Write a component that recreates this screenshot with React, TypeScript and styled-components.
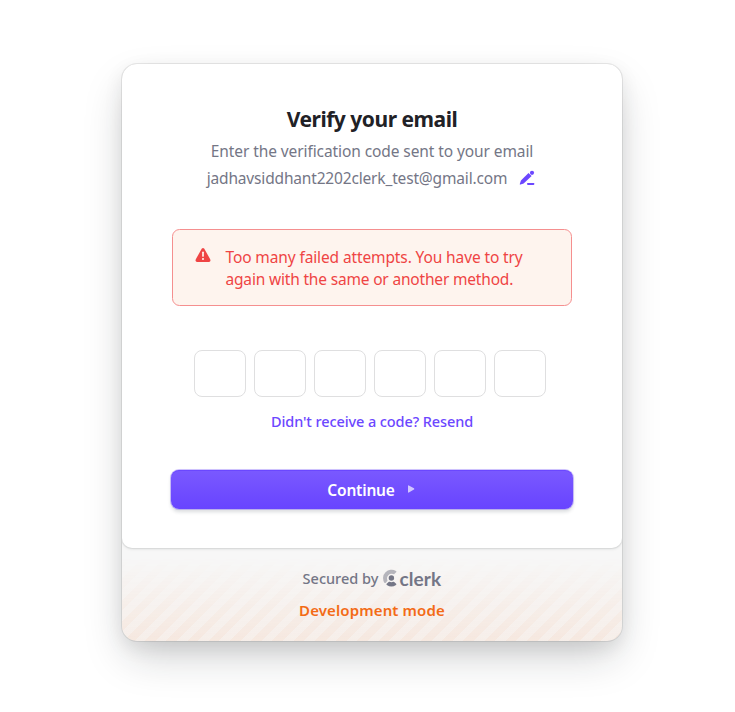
import React from 'react';
import styled, { createGlobalStyle } from 'styled-components';

const Global = createGlobalStyle`
  * { box-sizing: border-box; }
  body {
    margin: 0;
    background: #fff;
    font-family: "Segoe UI", "Noto Sans", "Open Sans", sans-serif;
    overflow: hidden;
  }
`;

const Page = styled.main`
  width: 735px;
  height: 712px;
  padding: 64px 0 0 122px;
`;

const Card = styled.div`
  width: 500px;
  height: 577px;
  border-radius: 15px;
  overflow: hidden;
  background: #f7f7f7;
  display: flex;
  flex-direction: column;
  box-shadow:
    0 6.25px 18.75px rgba(0, 0, 0, 0.08),
    0 18.75px 43.75px -6.25px rgba(25, 28, 33, 0.22),
    0 0 0 1px rgba(0, 0, 0, 0.08);
`;

const Body = styled.section`
  position: relative;
  height: 484px;
  flex: none;
  padding: 40px 50px 0;
  display: flex;
  flex-direction: column;
  align-items: center;
  background: #fff;
  border-radius: 15px 15px 10px 10px;
  box-shadow:
    0 0 2.5px rgba(0, 0, 0, 0.08),
    0 1.25px 2.5px rgba(25, 28, 33, 0.06),
    0 0 0 1px rgba(0, 0, 0, 0.04);
`;

const Title = styled.h1`
  margin: 0;
  height: 30px;
  font-size: 21px;
  line-height: 30px;
  font-weight: 700;
  color: #212126;
  letter-spacing: -0.48px;
  white-space: nowrap;
`;

const Subtitle = styled.p<{ $gap: number; $spacing: number }>`
  margin: ${(p) => p.$gap}px 0 0;
  height: 22px;
  display: flex;
  align-items: center;
  font-size: 15.5px;
  line-height: 22px;
  color: #747686;
  letter-spacing: ${(p) => p.$spacing}px;
  white-space: nowrap;
`;

const EditButton = styled.button`
  display: flex;
  margin: 0 2px 0 12px;
  padding: 0;
  border: 0;
  background: none;
`;

const Alert = styled.div`
  width: 400px;
  height: 77px;
  margin-top: 40px;
  padding: 16px 22px 0 22px;
  display: flex;
  gap: 14.5px;
  flex: none;
  border: 1px solid #f58f8f;
  border-radius: 7.5px;
  background: #fef4ee;
  color: #ef4444;
`;

const AlertText = styled.p`
  margin: 0;
  font-size: 15.5px;
  line-height: 22px;
  white-space: nowrap;
`;

const AlertLine = styled.span<{ $spacing: number }>`
  display: block;
  letter-spacing: ${(p) => p.$spacing}px;
`;

const AlertIcon = styled.svg`
  flex: none;
  margin-top: 1px;
`;

const Digits = styled.div`
  display: flex;
  gap: 8px;
  margin: 44px 4px 0 0;
`;

const Digit = styled.input`
  width: 52px;
  height: 47px;
  padding: 0;
  border: 1px solid #dfdfe0;
  border-radius: 8px;
  background: #fff;
  text-align: center;
  font: inherit;
`;

const Resend = styled.button`
  margin: 13px 0 0;
  padding: 0;
  border: 0;
  background: none;
  height: 22px;
  font-family: inherit;
  font-size: 14.5px;
  line-height: 22px;
  font-weight: 500;
  letter-spacing: -0.1px;
  color: #6c47ff;
  white-space: nowrap;
`;

const Continue = styled.button`
  width: 402px;
  height: 39px;
  flex: none;
  margin-top: 38px;
  padding: 1px 2px 0 0;
  display: flex;
  align-items: center;
  justify-content: center;
  gap: 12px;
  border: 0;
  border-radius: 8px;
  background: linear-gradient(180deg, #7a59ff 0%, #6844ff 100%);
  color: #fff;
  font-family: inherit;
  font-size: 15.5px;
  font-weight: 600;
  letter-spacing: -0.2px;
  box-shadow:
    inset 0 1px 0 rgba(96, 60, 255, 0.6),
    0 0 0 1px rgba(108, 71, 255, 0.32),
    0 2.5px 3.75px rgba(34, 42, 53, 0.16);
`;

const ContinueArrow = styled.svg`
  margin-top: -2px;
`;

const Footer = styled.footer`
  position: relative;
  flex: 1;
  padding-top: 18px;
  display: flex;
  flex-direction: column;
  align-items: center;
  &::before {
    content: "";
    position: absolute;
    inset: 0;
    background: repeating-linear-gradient(
      -45deg,
      rgba(243, 107, 22, 0.1) 0 7.5px,
      rgba(243, 107, 22, 0.06) 7.5px 15px
    );
    mask-image: linear-gradient(transparent 10%, black);
  }
`;

const Secured = styled.div`
  position: relative;
  display: flex;
  align-items: center;
  height: 24px;
  font-size: 14.5px;
  font-weight: 500;
  color: #747686;
  white-space: nowrap;
`;

const Logo = styled.span`
  display: flex;
  align-items: center;
  margin-left: 5px;
`;

const Wordmark = styled.span`
  position: relative;
  top: 1px;
  font-family: Lato, sans-serif;
  font-size: 19px;
  line-height: 22px;
  font-weight: 700;
  letter-spacing: 0.15px;
`;

const DevMode = styled.div`
  position: relative;
  margin-top: 9px;
  height: 22px;
  font-size: 15px;
  line-height: 22px;
  font-weight: 600;
  letter-spacing: 0.12px;
  color: #f36b16;
  white-space: nowrap;
`;

const PencilIcon = () => (
  <svg width="16" height="16" viewBox="0 0 16 16" fill="#6c47ff">
    <path d="M9.5 2.9 12.6 6 5.2 13.1Q4.6 13.6 4 13.8L1.4 14.6Q.6 14.8.8 14L1.6 11.4Q1.8 10.8 2.2 10.3Z" />
    <circle cx="13" cy="2.8" r="2.1" />
    <rect x="8" y="12.9" width="7.4" height="2" rx=".8" />
  </svg>
);

const WarningIcon = () => (
  <AlertIcon width="16" height="16" viewBox="0 0 16 16">
    <path
      d="M6.7 1.8Q8 .1 9.3 1.8L15.2 12.2Q16 14.8 14 15H2Q0 14.8.8 12.2Z"
      fill="#ef4444"
    />
    <path d="M8 5.3V9" stroke="#fef4ee" strokeWidth="1.7" strokeLinecap="round" />
    <circle cx="8" cy="12" r="1.05" fill="#fef4ee" />
  </AlertIcon>
);

const ClerkMark = () => (
  <svg width="16" height="18" viewBox="0 0 16 18">
    <path
      d="M13 2.1Q13.7 2.6 13.1 3.2L11.3 5Q10.9 5.4 10.3 5.1A4.6 4.6 0 0 0 4.4 11.2Q4.7 11.7 4.3 12.1L2.5 13.9Q1.9 14.4 1.4 13.7A8.4 8.4 0 0 1 13 2.1Z"
      fill="#747686"
      fillOpacity=".5"
    />
    <circle cx="8.4" cy="9" r="2.7" fill="#747686" />
    <path
      d="M13.1 14.8Q13.7 15.4 13 15.9A8.4 8.4 0 0 1 3.8 15.9Q3.1 15.4 3.7 14.8L5.6 12.9Q6 12.5 6.5 12.8A4.5 4.5 0 0 0 10.3 12.8Q10.8 12.5 11.2 12.9Z"
      fill="#747686"
    />
  </svg>
);

export default function App() {
  return (
    <>
      <Global />
      <Page>
        <Card>
          <Body>
            <Title>Verify your email</Title>
            <Subtitle $gap={6} $spacing={-0.09}>
              Enter the verification code sent to your email
            </Subtitle>
            <Subtitle $gap={5} $spacing={-0.17}>
              <span>jadhavsiddhant2202clerk_test@gmail.com</span>
              <EditButton aria-label="Edit email">
                <PencilIcon />
              </EditButton>
            </Subtitle>
            <Alert role="alert">
              <WarningIcon />
              <AlertText>
                <AlertLine $spacing={-0.12}>Too many failed attempts. You have to try</AlertLine>
                <AlertLine $spacing={-0.18}>again with the same or another method.</AlertLine>
              </AlertText>
            </Alert>
            <Digits>
              {[1, 2, 3, 4, 5, 6].map((n) => (
                <Digit key={n} maxLength={1} aria-label={`Digit ${n}`} />
              ))}
            </Digits>
            <Resend>Didn't receive a code? Resend</Resend>
            <Continue>
              Continue
              <ContinueArrow width="8" height="8" viewBox="0 0 8 8">
                <path
                  d="M1 .9Q1 0 1.8.4L7 3.3Q7.7 4 7 4.6L1.8 7.6Q1 8 1 7.1Z"
                  fill="#fff"
                  fillOpacity=".68"
                />
              </ContinueArrow>
            </Continue>
          </Body>
          <Footer>
            <Secured>
              Secured by
              <Logo>
                <ClerkMark />
                <Wordmark>clerk</Wordmark>
              </Logo>
            </Secured>
            <DevMode>Development mode</DevMode>
          </Footer>
        </Card>
      </Page>
    </>
  );
}
